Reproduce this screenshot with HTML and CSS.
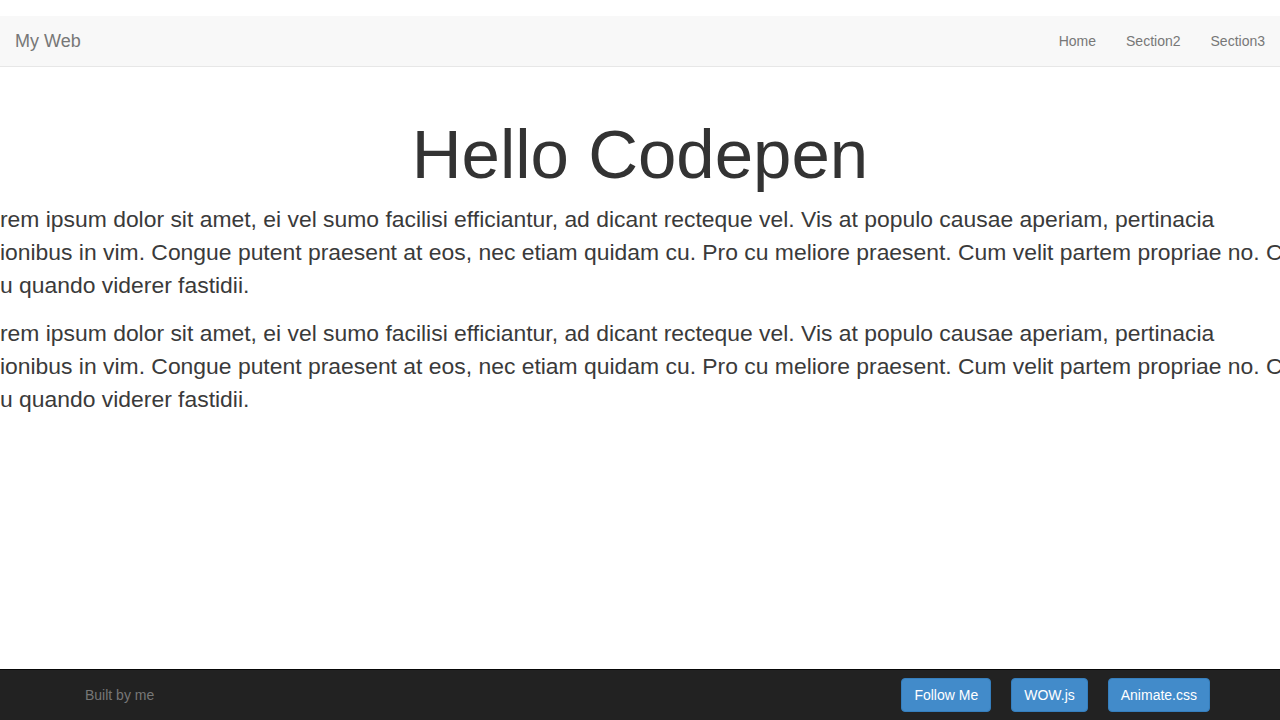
FILE: index.html
```html
<!DOCTYPE html>
<html lang="en">
<head>
    <meta charset="UTF-8">
    <meta name="viewport" content="width=device-width, initial-scale=1.0">
    <title>My Web</title>
    <link rel="stylesheet" href="styles.css">
</head>
<body>
    <!-- 顶部导航 -->
    <header class="navbar">
        <a class="brand" href="#">My Web</a>
        <ul class="nav">
            <li><a href="#">Home</a></li>
            <li><a href="#">Section2</a></li>
            <li><a href="#">Section3</a></li>
        </ul>
    </header>

    <!-- 主体内容 -->
    <main class="content">
        <h1>Hello Codepen</h1>
        <p>Lorem ipsum dolor sit amet, ei vel sumo facilisi efficiantur, ad dicant recteque vel. Vis at populo causae aperiam, pertinacia<br>
            deionibus in vim. Congue putent praesent at eos, nec etiam quidam cu. Pro cu meliore praesent. Cum velit partem propriae no. Cu<br>
            Lou quando viderer fastidii.</p>
        <p>Lorem ipsum dolor sit amet, ei vel sumo facilisi efficiantur, ad dicant recteque vel. Vis at populo causae aperiam, pertinacia<br>
            deionibus in vim. Congue putent praesent at eos, nec etiam quidam cu. Pro cu meliore praesent. Cum velit partem propriae no. Cu<br>
            Lou quando viderer fastidii.</p>
    </main>

    <!-- 底部栏 -->
    <footer class="footer">
        <div class="footer-inner">
            <p class="footer-text">Built by me</p>
            <div class="footer-buttons">
                <a class="btn" href="#">Follow Me</a>
                <a class="btn" href="#">WOW.js</a>
                <a class="btn" href="#">Animate.css</a>
            </div>
        </div>
    </footer>
</body>
</html>
```

FILE: styles.css
```css
/* 基础样式 */
html, body {
    height: 100%;
}

body {
    margin: 0;
    display: flex;
    flex-direction: column;
    font-family: "Liberation Sans", Arial, sans-serif;
    font-size: 14px;
    line-height: 1.42857;
    color: #333;
    background-color: #fff;
    overflow: hidden;
}

a {
    text-decoration: none;
}

/* 顶部导航 */
.navbar {
    margin-top: 16px;
    height: 50px;
    display: flex;
    justify-content: space-between;
    background-color: #f8f8f8;
    border-bottom: 1px solid #e7e7e7;
    flex-shrink: 0;
}

.brand {
    padding: 15px;
    font-size: 18px;
    line-height: 20px;
    color: #777;
}

.nav {
    display: flex;
    margin: 0;
    padding: 0;
    list-style: none;
}

.nav a {
    display: block;
    padding: 15px;
    line-height: 20px;
    color: #777;
}

/* 主体内容 */
.content {
    flex: 1;
    min-width: 0;
    padding-top: 50px;
    overflow: hidden;
}

.content h1 {
    margin: 0 0 10px;
    font-size: 69px;
    font-weight: 500;
    line-height: 1.1;
    text-align: center;
}

/* 段落比视口宽，两边被裁掉 */
.content p {
    margin: 0 0 15px -25.5px;
    font-size: 22.9px;
    line-height: 33px;
    color: #3a3a3a;
    white-space: nowrap;
}

/* 底部栏 */
.footer {
    height: 50px;
    background-color: #222;
    border-top: 1px solid #080808;
    flex-shrink: 0;
}

.footer-inner {
    width: 1140px;
    margin: 0 auto;
    padding: 0 15px;
    display: flex;
    justify-content: space-between;
}

.footer-text {
    margin: 15px 0 0 15px;
    line-height: 20px;
    color: #777;
}

.footer-buttons {
    display: flex;
    gap: 20px;
    margin-top: 8px;
}

.btn {
    display: block;
    padding: 6px 12px;
    line-height: 20px;
    color: #fff;
    background-color: #428bca;
    border: 1px solid #357ebd;
    border-radius: 4px;
}
```
